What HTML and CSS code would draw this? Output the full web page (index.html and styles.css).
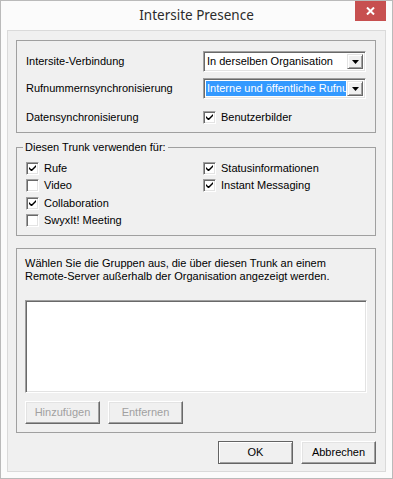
FILE: index.html
```html
<!DOCTYPE html>
<html lang="de">
<head>
    <meta charset="UTF-8">
    <meta name="viewport" content="width=device-width, initial-scale=1.0">
    <title>Intersite Presence</title>
    <link rel="stylesheet" href="styles.css">
</head>
<body>
    <div class="window">
        <div class="titlebar">
            <span class="title">Intersite Presence</span>
            <button class="close-btn" title="Schließen">
                <svg width="9" height="8" viewBox="0 0 9 8"><path d="M1 0.5 L8 7.5 M8 0.5 L1 7.5" stroke="#fff" stroke-width="2"/></svg>
            </button>
        </div>

        <div class="client">
            <div class="group settings">
                <span class="label">Intersite-Verbindung</span>
                <div class="combo">
                    <span class="combo-text">In derselben Organisation</span>
                    <span class="combo-btn"><svg width="7" height="4" viewBox="0 0 7 4"><path d="M0 0 H7 L3.5 4 Z" fill="#000"/></svg></span>
                </div>

                <span class="label">Rufnummernsynchronisierung</span>
                <div class="combo">
                    <span class="combo-text selected">Interne und öffentliche Rufnummern</span>
                    <span class="combo-btn"><svg width="7" height="4" viewBox="0 0 7 4"><path d="M0 0 H7 L3.5 4 Z" fill="#000"/></svg></span>
                </div>

                <span class="label small">Datensynchronisierung</span>
                <label class="check"><span class="box checked"></span>Benutzerbilder</label>
            </div>

            <fieldset class="group usage">
                <legend>Diesen Trunk verwenden für:</legend>
                <label class="check"><span class="box checked"></span>Rufe</label>
                <label class="check"><span class="box"></span>Video</label>
                <label class="check"><span class="box checked"></span>Collaboration</label>
                <label class="check"><span class="box"></span>SwyxIt! Meeting</label>
                <label class="check"><span class="box checked"></span>Statusinformationen</label>
                <label class="check"><span class="box checked"></span>Instant Messaging</label>
            </fieldset>

            <div class="group groups">
                <p class="hint">Wählen Sie die Gruppen aus, die über diesen Trunk an einem<br>Remote-Server außerhalb der Organisation angezeigt werden.</p>
                <div class="listbox"></div>
                <div class="list-buttons">
                    <button class="btn" disabled>Hinzufügen</button>
                    <button class="btn" disabled>Entfernen</button>
                </div>
            </div>

            <div class="dialog-buttons">
                <button class="btn default">OK</button>
                <button class="btn">Abbrechen</button>
            </div>
        </div>
    </div>
</body>
</html>
```

FILE: styles.css
```css
* {
    box-sizing: border-box;
}

body {
    margin: 0;
    font-family: "Liberation Sans", Arial, sans-serif;
    font-size: 11px;
    color: #000;
    background: #fff;
}

.window {
    width: 393px;
    height: 479px;
    border: 1px solid #bababa;
    background-color: #fbfbfb;
    display: flex;
    flex-direction: column;
}

.titlebar {
    height: 29px;
    position: relative;
    display: flex;
    justify-content: center;
    align-items: center;
}

.title {
    font-family: "Noto Sans", sans-serif;
    font-size: 13.5px;
    color: #2b2b2b;
    margin-top: -1px;
}

.close-btn {
    position: absolute;
    top: 0;
    right: 6px;
    width: 31px;
    height: 20px;
    border: none;
    padding: 0;
    background-color: #c75050;
    display: flex;
    justify-content: center;
    align-items: center;
}

.client {
    flex: 1;
    margin: 0 6px 6px;
    border: 1px solid #dadada;
    background-color: #f0f0f0;
    padding: 9px 9px 0 8px;
}

.group {
    border: 1px solid #a0a0a0;
    margin: 0;
}

/* Verbindung */
.settings {
    padding: 10px 0 8px 9px;
    display: grid;
    grid-template-columns: 177px 163px;
    grid-template-rows: 21px 27px 13px;
    row-gap: 6px;
    align-items: start;
}

.label {
    line-height: 21px;
    white-space: nowrap;
}

.label.small {
    line-height: 13px;
}

.combo {
    height: 21px;
    display: flex;
    background-color: #fff;
    border: 1px solid;
    border-color: #a0a0a0 #fff #fff #a0a0a0;
    box-shadow: inset 1px 1px #696969, inset -1px -1px #e3e3e3;
    padding: 2px;
}

.combo-text {
    flex: 1;
    min-width: 0;
    overflow: hidden;
    white-space: nowrap;
    line-height: 15px;
    padding-left: 1px;
    margin-right: 1px;
}

.combo-text.selected {
    background-color: #3399ff;
    color: #fff;
}

.combo-btn {
    width: 16px;
    height: 15px;
    background-color: #f0f0f0;
    border: 1px solid;
    border-color: #e3e3e3 #696969 #696969 #e3e3e3;
    box-shadow: inset 1px 1px #fff, inset -1px -1px #a0a0a0;
    display: flex;
    justify-content: center;
    align-items: center;
}

/* Checkboxen */
.check {
    display: flex;
    align-items: center;
    height: 13px;
    line-height: 13px;
    white-space: nowrap;
}

.box {
    width: 13px;
    height: 13px;
    margin-right: 5px;
    background-color: #fff;
    border: 1px solid;
    border-color: #a0a0a0 #fff #fff #a0a0a0;
    box-shadow: inset 1px 1px #696969, inset -1px -1px #e3e3e3;
}

.box.checked {
    background: #fff url("data:image/svg+xml,%3Csvg xmlns='http://www.w3.org/2000/svg' width='11' height='11' viewBox='0 0 11 11'%3E%3Cpath d='M2 4v2l2 2h1l4-4V2L5 6h-1L2 4z' fill='%23000'/%3E%3C/svg%3E") no-repeat 0 0;
}

/* Trunk */
.usage {
    margin-top: 8px;
    padding: 8px 0 8px 9px;
    display: grid;
    grid-template-columns: 177px auto;
    grid-template-rows: repeat(4, 13px);
    grid-auto-flow: column;
    row-gap: 4.33px;
}

.usage legend {
    padding: 0 2px;
    margin-left: -3px;
    line-height: 13px;
}

/* Gruppen */
.groups {
    margin-top: 12px;
    padding: 8px;
}

.hint {
    margin: 0;
    line-height: 13px;
}

.listbox {
    margin-top: 17px;
    height: 93px;
    background-color: #fff;
    border: 1px solid;
    border-color: #a0a0a0 #fff #fff #a0a0a0;
    box-shadow: inset 1px 1px #696969, inset -1px -1px #e3e3e3;
}

.list-buttons {
    margin-top: 8px;
    display: flex;
    gap: 8px;
}

.btn {
    width: 75px;
    height: 23px;
    padding: 0;
    font-family: inherit;
    font-size: 11px;
    color: #000;
    background-color: #f0f0f0;
    border: 1px solid;
    border-color: #fff #696969 #696969 #fff;
    box-shadow: inset -1px -1px #a0a0a0, inset 1px 1px #e3e3e3;
}

.btn:disabled {
    color: #a0a0a0;
}

.btn.default {
    border-color: #646464;
    box-shadow: inset 1px 1px #fff, inset -1px -1px #a0a0a0;
}

.dialog-buttons {
    margin-top: 8px;
    display: flex;
    justify-content: flex-end;
    gap: 8px;
}
```
